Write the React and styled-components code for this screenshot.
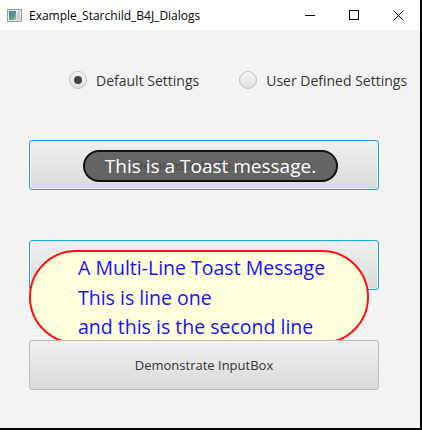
import React from 'react'
import styled, { createGlobalStyle } from 'styled-components'

const GlobalStyle = createGlobalStyle`
  html, body {
    margin: 0;
    padding: 0;
  }
  body {
    font-family: "Open Sans", "Noto Sans", sans-serif;
  }
`

const Window = styled.div`
  width: 422px;
  height: 430px;
  box-sizing: border-box;
  border-right: 2px solid #000;
  border-bottom: 2px solid #000;
  background: #f3f3f3;
  display: flex;
  flex-direction: column;
  overflow: hidden;
`

const TitleBar = styled.div`
  height: 30px;
  background: #fff;
  display: flex;
  align-items: center;
  flex-shrink: 0;
`

const AppIcon = styled.svg`
  margin-left: 7px;
  margin-right: 7px;
`

const Title = styled.div`
  flex: 1;
  font-size: 12px;
  color: #000;
  white-space: nowrap;
`

const Caption = styled.div`
  width: ${p => p.w}px;
  height: 30px;
  display: flex;
  align-items: center;
  justify-content: center;
`

const Content = styled.div`
  flex: 1;
  display: flex;
  flex-direction: column;
  padding: 39px 0 0 29px;
`

const RadioRow = styled.div`
  display: flex;
  align-items: center;
  padding-left: 40px;
  gap: 40px;
  height: 22px;
`

const RadioItem = styled.label`
  display: flex;
  align-items: center;
  gap: 9px;
  font-size: 14px;
  color: #333;
  white-space: nowrap;
`

const RadioCircle = styled.span`
  width: 18px;
  height: 18px;
  flex-shrink: 0;
  border-radius: 50%;
  box-sizing: border-box;
  border: 1px solid #c0c0c0;
  background: linear-gradient(#f6f6f6, #dedede);
  display: flex;
  align-items: center;
  justify-content: center;
  &::after {
    content: '';
    width: 8px;
    height: 8px;
    border-radius: 50%;
    background: ${p => (p.checked ? '#444' : 'transparent')};
  }
`

const Buttons = styled.div`
  display: flex;
  flex-direction: column;
  gap: 50px;
  margin-top: 49px;
`

const ButtonSlot = styled.div`
  position: relative;
  width: 350px;
  height: 50px;
`

const Button = styled.button`
  width: 100%;
  height: 100%;
  box-sizing: border-box;
  border-radius: 3px;
  border: 1px solid ${p => (p.focused ? '#17a4dd' : '#bcbcbc')};
  box-shadow: ${p => (p.focused ? 'inset 0 0 0 1px #e8f4fa' : 'none')};
  background: linear-gradient(#f0f0f0, #dadada);
  font-family: "Open Sans", "Noto Sans", sans-serif;
  font-size: 13px;
  color: #333;
  padding: 0;
`

const DarkToast = styled.div`
  position: absolute;
  left: 54px;
  top: 10px;
  width: 255px;
  height: 32px;
  box-sizing: border-box;
  border: 2px solid #111;
  border-radius: 16px;
  background: rgba(75, 75, 75, 0.84);
  color: #fff;
  font-size: 19px;
  display: flex;
  align-items: center;
  justify-content: center;
  white-space: nowrap;
`

const NoteToast = styled.div`
  position: absolute;
  left: 0;
  top: 10px;
  width: 340px;
  height: 94px;
  box-sizing: border-box;
  border: 2px solid #ff1010;
  border-radius: 47px;
  background: #ffffdc;
  color: #1212ff;
  font-size: 19.5px;
  line-height: 29.5px;
  padding: 1px 0 0 47px;
  white-space: nowrap;
`

export default function App() {
  return (
    <>
      <GlobalStyle />
      <Window>
        <TitleBar>
          <AppIcon width="15" height="13" viewBox="0 0 15 13">
            <defs>
              <linearGradient id="ig" x1="0" y1="0" x2="1" y2="1">
                <stop offset="0" stopColor="#3f7fa8" />
                <stop offset="0.6" stopColor="#5aa08a" />
                <stop offset="1" stopColor="#9ec7a0" />
              </linearGradient>
            </defs>
            <rect x="0.5" y="0.5" width="14" height="12" fill="#e8e8e8" stroke="#9a9a9a" />
            <rect x="2" y="2" width="7" height="9" fill="url(#ig)" />
            <rect x="10" y="2" width="3" height="9" fill="#c8d0d8" />
          </AppIcon>
          <Title>Example_Starchild_B4J_Dialogs</Title>
          <Caption w={44}>
            <svg width="10" height="10" viewBox="0 0 10 10">
              <path d="M0 5.5h10" stroke="#000" strokeWidth="1" />
            </svg>
          </Caption>
          <Caption w={44}>
            <svg width="10" height="10" viewBox="0 0 10 10">
              <rect x="0.5" y="0.5" width="9" height="9" fill="none" stroke="#000" />
            </svg>
          </Caption>
          <Caption w={44}>
            <svg width="11" height="11" viewBox="0 0 11 11">
              <path d="M0.5 0.5l10 10M10.5 0.5l-10 10" stroke="#000" strokeWidth="1" />
            </svg>
          </Caption>
        </TitleBar>
        <Content>
          <RadioRow>
            <RadioItem>
              <RadioCircle checked />
              Default Settings
            </RadioItem>
            <RadioItem>
              <RadioCircle />
              User Defined Settings
            </RadioItem>
          </RadioRow>
          <Buttons>
            <ButtonSlot>
              <Button focused>Demonstrate ToastMsg</Button>
              <DarkToast>This is a Toast message.</DarkToast>
            </ButtonSlot>
            <ButtonSlot>
              <Button focused>Demonstrate Multi-Line ToastMsg</Button>
              <NoteToast>
                A Multi-Line Toast Message
                <br />
                This is line one
                <br />
                and this is the second line
              </NoteToast>
            </ButtonSlot>
            <ButtonSlot>
              <Button>Demonstrate InputBox</Button>
            </ButtonSlot>
          </Buttons>
        </Content>
      </Window>
    </>
  )
}
